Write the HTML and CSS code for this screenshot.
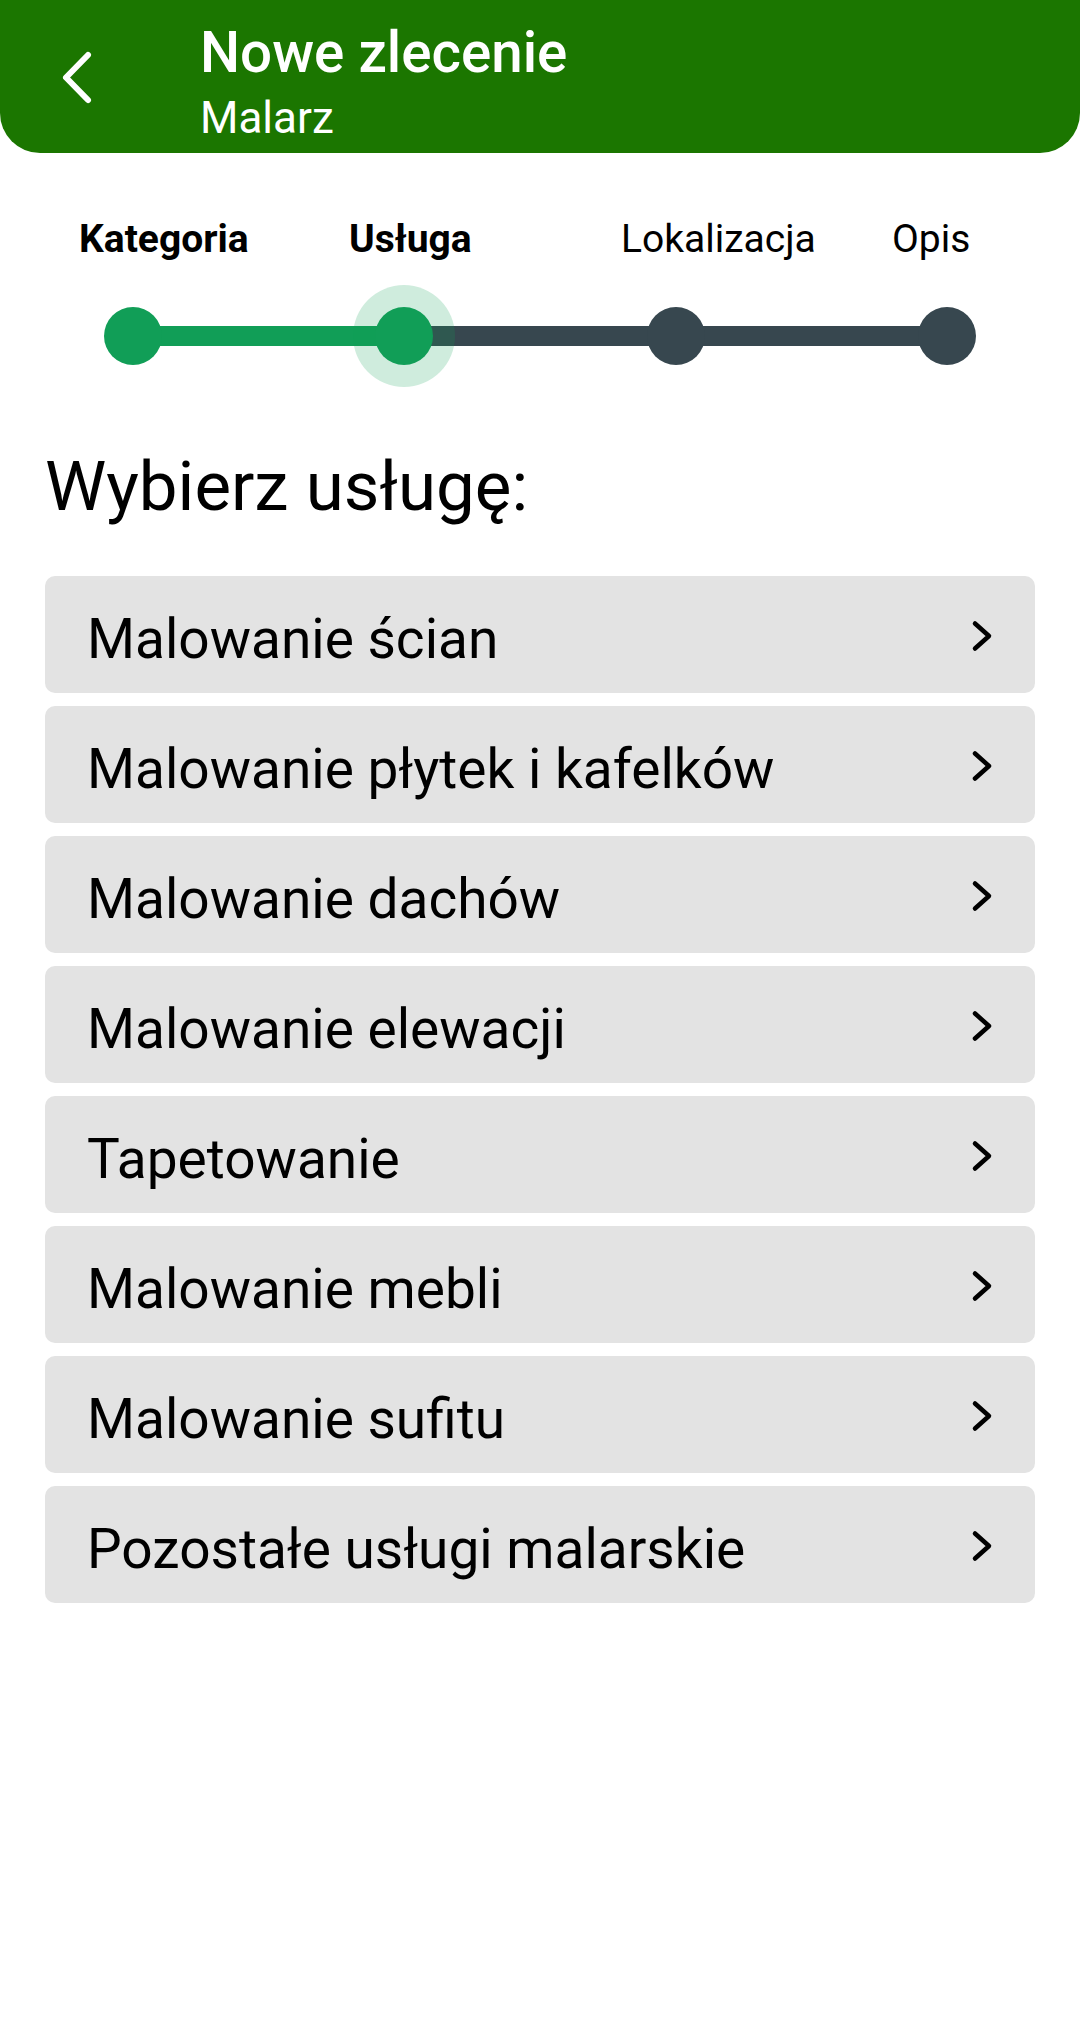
FILE: index.html
```html
<!DOCTYPE html>
<html lang="pl">
<head>
<meta charset="utf-8">
<title>Nowe zlecenie</title>
<link rel="stylesheet" href="styles.css">
</head>
<body>
<header class="appbar">
  <svg class="back" width="40" height="60" viewBox="0 0 40 60" aria-hidden="true">
    <path d="M32 8 L10 30.5 L32 53" fill="none" stroke="#fff" stroke-width="6" stroke-linecap="round" stroke-linejoin="round"/>
  </svg>
  <div class="titles">
    <div class="title">Nowe zlecenie</div>
    <div class="subtitle">Malarz</div>
  </div>
</header>

<section class="stepper">
  <div class="labels">
    <span class="label done">Kategoria</span>
    <span class="label done">Usługa</span>
    <span class="label">Lokalizacja</span>
    <span class="label">Opis</span>
  </div>
  <div class="track">
    <span class="line-dark"></span>
    <span class="line-green"></span>
    <span class="dot green"></span>
    <span class="dot green active"></span>
    <span class="dot"></span>
    <span class="dot"></span>
  </div>
</section>

<h1 class="heading">Wybierz usługę:</h1>

<ul class="list">
  <li class="item"><span class="item-text">Malowanie ścian</span><svg class="chev" width="24" height="36" viewBox="0 0 24 36"><path d="M5 6.5 L19 19 L5 31.5" fill="none" stroke="#000" stroke-width="4.5" stroke-linecap="round" stroke-linejoin="round"/></svg></li>
  <li class="item"><span class="item-text">Malowanie płytek i kafelków</span><svg class="chev" width="24" height="36" viewBox="0 0 24 36"><path d="M5 6.5 L19 19 L5 31.5" fill="none" stroke="#000" stroke-width="4.5" stroke-linecap="round" stroke-linejoin="round"/></svg></li>
  <li class="item"><span class="item-text">Malowanie dachów</span><svg class="chev" width="24" height="36" viewBox="0 0 24 36"><path d="M5 6.5 L19 19 L5 31.5" fill="none" stroke="#000" stroke-width="4.5" stroke-linecap="round" stroke-linejoin="round"/></svg></li>
  <li class="item"><span class="item-text">Malowanie elewacji</span><svg class="chev" width="24" height="36" viewBox="0 0 24 36"><path d="M5 6.5 L19 19 L5 31.5" fill="none" stroke="#000" stroke-width="4.5" stroke-linecap="round" stroke-linejoin="round"/></svg></li>
  <li class="item"><span class="item-text">Tapetowanie</span><svg class="chev" width="24" height="36" viewBox="0 0 24 36"><path d="M5 6.5 L19 19 L5 31.5" fill="none" stroke="#000" stroke-width="4.5" stroke-linecap="round" stroke-linejoin="round"/></svg></li>
  <li class="item"><span class="item-text">Malowanie mebli</span><svg class="chev" width="24" height="36" viewBox="0 0 24 36"><path d="M5 6.5 L19 19 L5 31.5" fill="none" stroke="#000" stroke-width="4.5" stroke-linecap="round" stroke-linejoin="round"/></svg></li>
  <li class="item"><span class="item-text">Malowanie sufitu</span><svg class="chev" width="24" height="36" viewBox="0 0 24 36"><path d="M5 6.5 L19 19 L5 31.5" fill="none" stroke="#000" stroke-width="4.5" stroke-linecap="round" stroke-linejoin="round"/></svg></li>
  <li class="item"><span class="item-text">Pozostałe usługi malarskie</span><svg class="chev" width="24" height="36" viewBox="0 0 24 36"><path d="M5 6.5 L19 19 L5 31.5" fill="none" stroke="#000" stroke-width="4.5" stroke-linecap="round" stroke-linejoin="round"/></svg></li>
</ul>
</body>
</html>
```

FILE: styles.css
```css
* { box-sizing: border-box; }

html, body {
  margin: 0;
  padding: 0;
  background: #ffffff;
}

body {
  width: 1080px;
  min-height: 2022px;
  font-family: Roboto, "Noto Sans", "Liberation Sans", sans-serif;
  color: #000;
}

/* App bar */
.appbar {
  display: flex;
  align-items: flex-start;
  height: 153px;
  background: #1b7600;
  border-bottom-left-radius: 40px;
  border-bottom-right-radius: 40px;
  color: #fff;
}

.back {
  display: block;
  margin-left: 56px;
  margin-top: 47px;
  flex: none;
}

.titles {
  margin-left: 104px;
  margin-top: 23px;
  display: flex;
  flex-direction: column;
}

.title {
  font-size: 56.5px;
  font-weight: 500;
  line-height: 60px;
  height: 60px;
  white-space: nowrap;
}

.subtitle {
  margin-top: 10px;
  font-size: 44px;
  font-weight: 400;
  line-height: 50px;
}

/* Stepper */
.stepper {
  display: flex;
  flex-direction: column;
}

.labels {
  margin-top: 63px;
  padding-left: 79px;
  display: grid;
  grid-template-columns: 270px 272px 271px auto;
}

.label {
  font-size: 39px;
  line-height: 46px;
  font-weight: 400;
  white-space: nowrap;
}

.label.done {
  font-weight: 700;
}

.track {
  position: relative;
  margin-top: 45px;
  margin-left: 104px;
  width: 872px;
  height: 58px;
  display: flex;
  justify-content: space-between;
  align-items: center;
}

.line-dark,
.line-green {
  position: absolute;
  top: 19px;
  height: 20px;
  z-index: 0;
}

.line-dark {
  left: 29px;
  right: 29px;
  background: #37474f;
}

.line-green {
  left: 29px;
  width: 271px;
  background: #119e57;
}

.dot {
  position: relative;
  z-index: 1;
  width: 58px;
  height: 58px;
  border-radius: 50%;
  background: #37474f;
}

.dot.green {
  background: #119e57;
}

.dot.active {
  box-shadow: 0 0 0 22px rgba(17, 158, 87, 0.2);
}

/* Heading */
.heading {
  margin: 82px 0 0 0;
  padding-left: 45px;
  font-size: 69px;
  line-height: 80px;
  font-weight: 400;
}

/* List */
.list {
  list-style: none;
  margin: 49px 45px 0 45px;
  padding: 0;
  display: flex;
  flex-direction: column;
  gap: 13px;
}

.item {
  height: 117px;
  background: #e3e3e3;
  border-radius: 10px;
  display: flex;
  align-items: center;
  justify-content: space-between;
  padding-left: 42px;
  padding-right: 41px;
}

.item-text {
  font-size: 55px;
  line-height: 64px;
  padding-top: 8px;
  white-space: nowrap;
}

.chev {
  display: block;
  flex: none;
}
```
